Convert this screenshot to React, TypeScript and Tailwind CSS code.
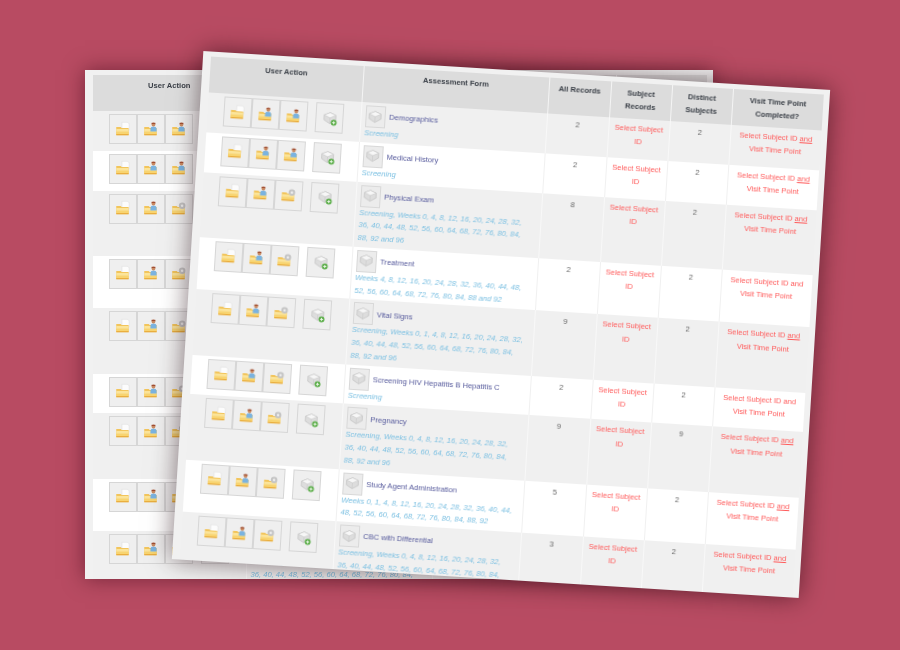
const WEEKS_A = "Screening, Weeks 0, 4, 8, 12, 16, 20, 24, 28, 32, 36, 40, 44, 48, 52, 56, 60, 64, 68, 72, 76, 80, 84, 88, 92 and 96";
const WEEKS_B = "Screening, Weeks 0, 1, 4, 8, 12, 16, 20, 24, 28, 32, 36, 40, 44, 48, 52, 56, 60, 64, 68, 72, 76, 80, 84, 88, 92 and 96";

const rows = [
  { name: "Demographics", visits: "Screening", all: 2, distinct: 2, third: "person", line: true },
  { name: "Medical History", visits: "Screening", all: 2, distinct: 2, third: "person", line: true },
  { name: "Physical Exam", visits: WEEKS_A, all: 8, distinct: 2, third: "gear", line: true },
  { name: "Treatment", visits: "Weeks 4, 8, 12, 16, 20, 24, 28, 32, 36, 40, 44, 48, 52, 56, 60, 64, 68, 72, 76, 80, 84, 88 and 92", all: 2, distinct: 2, third: "gear", line: false },
  { name: "Vital Signs", visits: WEEKS_B, all: 9, distinct: 2, third: "gear", line: true },
  { name: "Screening HIV Hepatitis B Hepatitis C", visits: "Screening", all: 2, distinct: 2, third: "gear", line: false },
  { name: "Pregnancy", visits: WEEKS_A, all: 9, distinct: 9, third: "gear", line: true },
  { name: "Study Agent Administration", visits: "Weeks 0, 1, 4, 8, 12, 16, 20, 24, 28, 32, 36, 40, 44, 48, 52, 56, 60, 64, 68, 72, 76, 80, 84, 88, 92", all: 5, distinct: 2, third: "gear", line: true },
  { name: "CBC with Differential", visits: WEEKS_A, all: 3, distinct: 2, third: "gear", line: true },
];

function Folder({ extra }: { extra: "doc" | "person" | "gear" }) {
  return (
    <svg width="18" height="18" viewBox="0 0 16 16" className="-mt-[1px] -ml-[1px]">
      {extra === "doc" && <path d="M7 2h5l1.5 1.5V9H7z" fill="#fcfcfc" stroke="#dedede" strokeWidth="0.5" />}
      <path d="M2 6.2h4l.8 1H13V13.5H2z" fill="#f2c55c" />
      <path d="M2 8h11v2.5H2z" fill="#fbe49a" />
      <path d="M2 10.5h11v2H2z" fill="#f8d470" />
      <path d="M2 12.6h11v.9H2z" fill="#e8a93a" />
      {extra === "person" && (
        <>
          <path d="M7.5 8c0-1.6 1.3-2.3 2.7-2.3s2.8.7 2.8 2.3v2.2H7.5z" fill="#7ab3e0" />
          <circle cx="10.2" cy="4" r="1.7" fill="#c98a62" />
          <path d="M8.5 2.5h3.4v1H8.5z" fill="#9c4a30" />
        </>
      )}
      {extra === "gear" && (
        <>
          <circle cx="10.8" cy="6" r="2.9" fill="#c4c4c4" />
          <circle cx="10.8" cy="6" r="1.1" fill="#efefef" />
        </>
      )}
    </svg>
  );
}

function Boxes({ badge }: { badge?: boolean }) {
  return (
    <svg width="17" height="17" viewBox="0 0 16 16">
      <path d="M8 2.5l5.5 2.4v4.6L8 12.8 2.5 9.5V4.9z" fill="#dddddd" stroke="#bdbdbd" strokeWidth="0.6" />
      <path d="M2.5 4.9L8 7.4l5.5-2.5L8 2.5z" fill="#f7f7f7" stroke="#c6c6c6" strokeWidth="0.5" />
      <path d="M8 7.4v5.4" stroke="#c6c6c6" strokeWidth="0.5" />
      {badge && (
        <>
          <circle cx="11.8" cy="11.8" r="2.8" fill="#5cae4a" />
          <path d="M10.3 11.8h3M11.8 10.3v3" stroke="#eaf7e6" strokeWidth="0.9" />
        </>
      )}
    </svg>
  );
}

function ActionButton({ children }: { children: React.ReactNode }) {
  return (
    <div className="flex h-[30px] w-[28px] shrink-0 items-center justify-center border border-[#d6d6d6] bg-[#efefef]">
      {children}
    </div>
  );
}

function Sheet({ className }: { className: string }) {
  return (
    <div className={`absolute h-[509px] w-[628px] overflow-hidden bg-[#f1f1f1] px-[8px] pt-[5px] font-['Liberation_Sans',Arial,sans-serif] text-[7.6px] ${className}`}>
      <table className="w-[614px] table-fixed">
        <colgroup>
          <col className="w-[153px]" />
          <col className="w-[186px]" />
          <col className="w-[62px]" />
          <col className="w-[61px]" />
          <col className="w-[61px]" />
          <col className="w-[91px]" />
        </colgroup>
        <thead>
          <tr className="h-[36px] bg-[#dcdcdc] text-[#3b4048]">
            {["User Action", "Assessment Form", "All Records", "Subject Records", "Distinct Subjects", "Visit Time Point Completed?"].map((h) => (
              <th key={h} className="border-r border-[#f4f4f4] px-[6px] pt-[5px] pb-[4px] align-top leading-[12.5px] font-bold last:border-r-0">
                {h}
              </th>
            ))}
          </tr>
        </thead>
        <tbody>
          {rows.map((r, i) => {
            const line = i % 2 === 1 ? "border-[#f0f0f0]" : "border-[#f8f8f8]";
            return (
              <tr key={r.name} className={i % 2 === 1 ? "bg-white" : "bg-[#f0f0f0]"}>
                <td className={`border-r pt-[3px] pb-[2px] align-top ${line}`}>
                  <div className="flex justify-center">
                    <ActionButton><Folder extra="doc" /></ActionButton>
                    <ActionButton><Folder extra="person" /></ActionButton>
                    <ActionButton><Folder extra={r.third as "person" | "gear"} /></ActionButton>
                    <div className="ml-[8px]">
                      <ActionButton><Boxes badge /></ActionButton>
                    </div>
                  </div>
                </td>
                <td className={`border-r pt-[3px] pr-[7px] pb-[2px] pl-[4px] align-top ${line}`}>
                  <div className="flex h-[22px] items-center gap-[4px]">
                    <div className="flex h-[22px] w-[20px] items-center justify-center border border-[#d8d8d8] bg-[#ececec]">
                      <Boxes />
                    </div>
                    <span className="text-[#565a9c]">{r.name}</span>
                  </div>
                  <div className="leading-[12.75px] text-[#7cc0e2] italic">{r.visits}</div>
                </td>
                <td className={`border-r pt-[3px] text-center align-top leading-[13px] text-[#666666] ${line}`}>{r.all}</td>
                <td className={`border-r px-[5px] pt-[3px] text-center align-top leading-[13.3px] text-[#ff5a5a] ${line}`}>Select Subject ID</td>
                <td className={`border-r pt-[3px] text-center align-top leading-[13px] text-[#666666] ${line}`}>{r.distinct}</td>
                <td className="px-[3px] pt-[3px] text-center align-top leading-[13.3px] text-[#ff5a5a]">
                  Select Subject ID <span className={r.line ? "underline" : ""}>and</span> Visit Time Point
                </td>
              </tr>
            );
          })}
        </tbody>
      </table>
    </div>
  );
}

export default function App() {
  return (
    <div className="relative h-[650px] w-[900px] overflow-hidden bg-[#b84b62]">
      {/* back copy, sits straight */}
      <Sheet className="top-[70px] left-[85px] blur-[0.3px] shadow-[0_0_20px_rgba(50,0,15,0.5)]" />
      {/* front copy, tilted */}
      <Sheet className="top-[70px] left-[187px] rotate-[3.55deg] blur-[0.35px] shadow-[0_0_24px_rgba(30,0,10,0.55)]" />
    </div>
  );
}
